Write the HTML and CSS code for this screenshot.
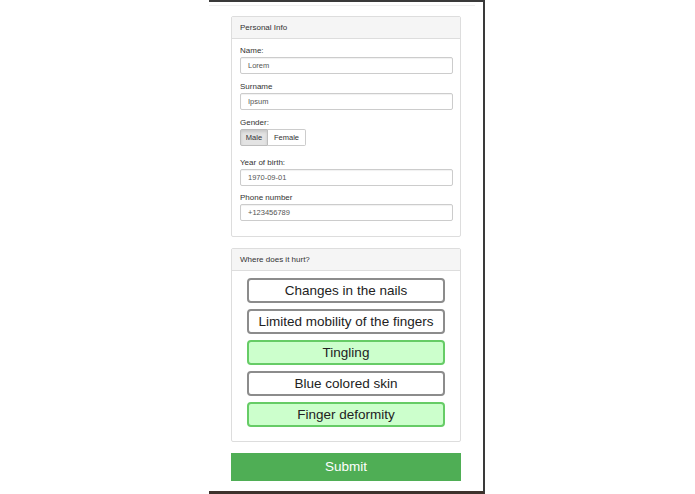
FILE: index.html
```html
<!DOCTYPE html>
<html>
<head>
<meta charset="utf-8">
<link rel="stylesheet" href="styles.css">
</head>
<body>
<div class="frame">
  <div class="topline"></div>
  <div class="panel">
    <div class="panel-heading">Personal Info</div>
    <div class="panel-body">
      <div class="group">
        <label class="lbl">Name:</label>
        <div class="input">Lorem</div>
      </div>
      <div class="group">
        <label class="lbl">Surname</label>
        <div class="input">Ipsum</div>
      </div>
      <div class="group group-gender">
        <label class="lbl">Gender:</label>
        <div class="btn-group">
          <span class="seg seg-active">Male</span><span class="seg">Female</span>
        </div>
      </div>
      <div class="group group-year">
        <label class="lbl">Year of birth:</label>
        <div class="input">1970-09-01</div>
      </div>
      <div class="group">
        <label class="lbl">Phone number</label>
        <div class="input">+123456789</div>
      </div>
    </div>
  </div>
  <div class="panel panel-hurt">
    <div class="panel-heading">Where does it hurt?</div>
    <div class="panel-body options">
      <div class="opt">Changes in the nails</div>
      <div class="opt">Limited mobility of the fingers</div>
      <div class="opt opt-on">Tingling</div>
      <div class="opt">Blue colored skin</div>
      <div class="opt opt-on">Finger deformity</div>
    </div>
  </div>
  <div class="submit">Submit</div>
</div>
</body>
</html>
```
FILE: styles.css
```css
html, body {
  margin: 0;
  padding: 0;
  background: #ffffff;
}
body {
  font-family: "Liberation Sans", Arial, Helvetica, sans-serif;
  color: #333;
}
.frame {
  box-sizing: border-box;
  margin-left: 209px;
  width: 276px;
  height: 494px;
  border-top: 2px solid #3a3a3a;
  border-right: 2px solid #3a3a3a;
  border-bottom: 3px solid #3d322c;
  padding: 0 22px 0 22px;
}
.topline {
  height: 1px;
  background: #f0f0f0;
  margin: 3px -14px 10px -22px;
}
.panel {
  border: 1px solid #dddddd;
  border-radius: 2px;
  background: #fff;
}
.panel-heading {
  height: 21px;
  line-height: 21px;
  background: #f5f5f5;
  border-bottom: 1px solid #dddddd;
  padding: 0 8px;
  font-size: 8px;
  color: #333;
}
.panel-body {
  padding: 6px 7px 15px 8px;
}
.group {
  margin-bottom: 7px;
}
.group:last-child {
  margin-bottom: 0;
}
.group-gender {
  margin-bottom: 11px;
}
.group-year {
  margin-bottom: 6px;
}
.lbl {
  display: block;
  font-size: 8px;
  line-height: 11px;
  height: 11px;
  margin-bottom: 1px;
  color: #333;
}
.input {
  box-sizing: border-box;
  height: 17px;
  border: 1px solid #cccccc;
  border-radius: 2px;
  box-shadow: inset 0 1px 1px rgba(0,0,0,0.06);
  padding: 0 7px;
  font-size: 7.5px;
  line-height: 15px;
  color: #555;
}
.btn-group {
  display: flex;
}
.seg {
  box-sizing: border-box;
  height: 17px;
  line-height: 15px;
  border: 1px solid #cccccc;
  font-size: 7.5px;
  color: #333;
  padding: 0 6px;
  background: #fff;
}
.seg + .seg {
  border-left: none;
  border-radius: 0 2px 2px 0;
}
.seg-active {
  width: 28px;
  text-align: center;
  padding: 0;
  background: #e3e3e3;
  border-color: #bdbdbd;
  border-radius: 2px 0 0 2px;
  box-shadow: inset 0 2px 3px rgba(0,0,0,0.12);
}
.panel-hurt {
  margin-top: 11px;
}
.options {
  padding: 7px 15px 14px 15px;
  display: flex;
  flex-direction: column;
  gap: 6px;
}
.opt {
  box-sizing: border-box;
  height: 25px;
  line-height: 21px;
  border: 2px solid #8c8c8c;
  border-radius: 4px;
  text-align: center;
  font-size: 13.5px;
  color: #222;
  background: #fff;
}
.opt-on {
  background: #ccffcc;
  border-color: #66cc66;
}
.submit {
  margin-top: 11px;
  height: 28px;
  line-height: 28px;
  background: #4fae55;
  color: #fff;
  text-align: center;
  font-size: 13.5px;
}
```
